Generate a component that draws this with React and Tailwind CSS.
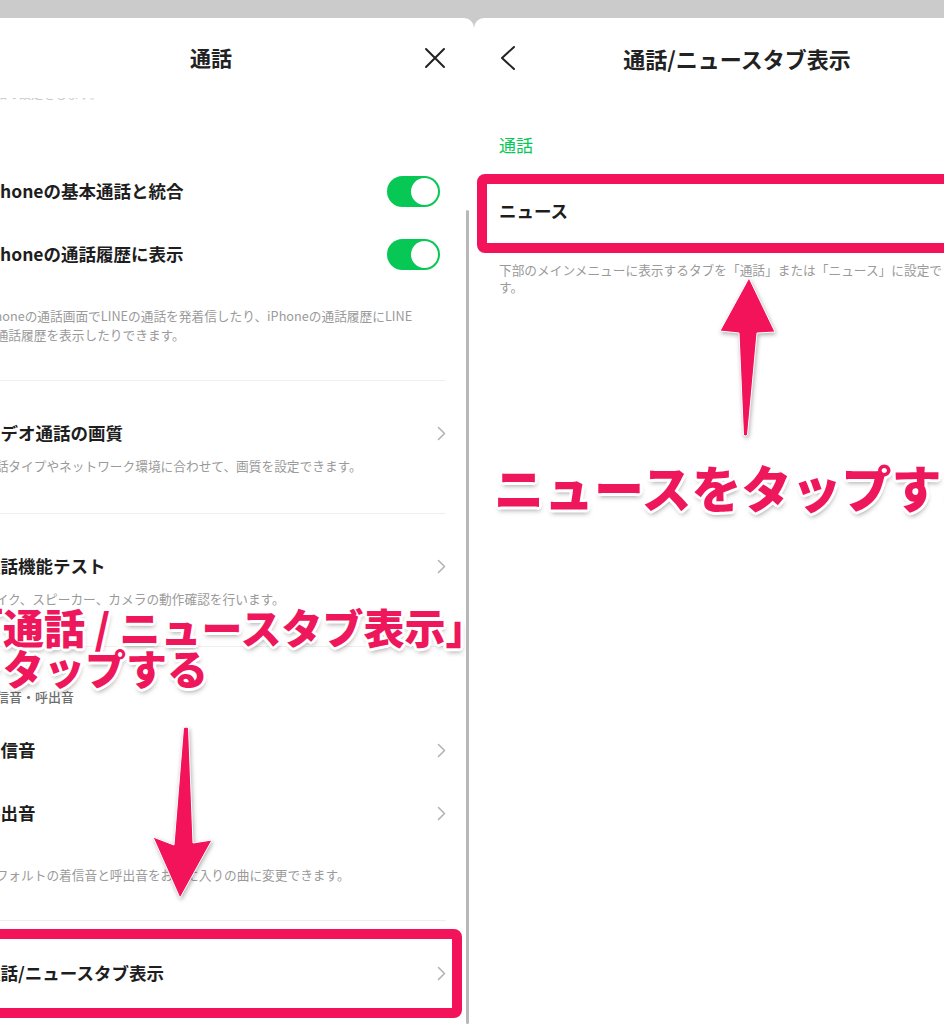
import React from 'react';

const PINK = 'text-[#ef175c]';

const Chevron = () => (
  <svg width="9" height="15" viewBox="0 0 9 15" className="shrink-0">
    <path d="M1.5 1.5 L7.5 7.5 L1.5 13.5" fill="none" stroke="#b3b3b3" strokeWidth="1.6" strokeLinecap="round" strokeLinejoin="round" />
  </svg>
);

const Toggle = () => (
  <div className="w-[53px] h-[31px] rounded-full bg-[#07c755] p-[2px] flex justify-end mr-[6px]">
    <div className="w-[27px] h-[27px] rounded-full bg-white" />
  </div>
);

const ToggleRow = ({ title }) => (
  <div className="h-[63px] flex items-center justify-between">
    <span className="text-[17.5px] font-bold text-[#1e1e1e] whitespace-nowrap">{title}</span>
    <Toggle />
  </div>
);

const LinkRow = ({ title, className = '' }) => (
  <div className={`flex items-center justify-between ${className}`}>
    <span className="text-[17.5px] font-bold text-[#1e1e1e] whitespace-nowrap">{title}</span>
    <Chevron />
  </div>
);

const Desc = ({ children, className = '' }) => (
  <div className={`text-[12.7px] leading-[19px] text-[#9a9a9a] whitespace-nowrap ${className}`}>{children}</div>
);

const Divider = () => <div className="h-px bg-[#efefef]" />;

function LeftPanel() {
  return (
    <div className="w-[474px] shrink-0 bg-white rounded-tr-[10px] overflow-hidden">
      <div className="-ml-[52px] w-[526px]">
        <div className="h-[80px] grid grid-cols-[1fr_auto_1fr] items-center">
          <div />
          <span className="text-[21px] font-bold text-[#222]">通話</span>
          <div className="flex justify-end pr-[28px]">
            <svg width="22" height="22" viewBox="0 0 22 22">
              <path d="M2 2 L20 20 M20 2 L2 20" stroke="#222" strokeWidth="2" strokeLinecap="round" />
            </svg>
          </div>
        </div>

        <div className="pl-[35px] pr-[28px]">
          <div className="h-[62px]">
            <div className="h-[3px] overflow-hidden">
              <div className="-mt-[12px] text-[12px] leading-[15px] text-[#c8c8c8] whitespace-nowrap">通話の設定をします。</div>
            </div>
          </div>
          <ToggleRow title="iPhoneの基本通話と統合" />
          <ToggleRow title="iPhoneの通話履歴に表示" />
          <Desc className="pt-[20px] pb-[36px]">
            iPhoneの通話画面でLINEの通話を発着信したり、iPhoneの通話履歴にLINE
            <br />
            の通話履歴を表示したりできます。
          </Desc>
          <Divider />

          <div className="pt-[40px] pb-[38px]">
            <LinkRow title="ビデオ通話の画質" className="h-[24px]" />
            <Desc className="mt-[11px]">通話タイプやネットワーク環境に合わせて、画質を設定できます。</Desc>
          </div>
          <Divider />

          <div className="pt-[40px] pb-[38px]">
            <LinkRow title="通話機能テスト" className="h-[24px]" />
            <Desc className="mt-[11px]">マイク、スピーカー、カメラの動作確認を行います。</Desc>
          </div>
          <Divider />

          <div className="pt-[40px] text-[13px] leading-[19px] font-medium text-[#6e6e6e]">着信音・呼出音</div>
          <div className="mt-[13px]">
            <LinkRow title="着信音" className="h-[63px]" />
            <LinkRow title="呼出音" className="h-[63px]" />
          </div>
          <Desc className="pt-[20px] pb-[36px]">デフォルトの着信音と呼出音をお気に入りの曲に変更できます。</Desc>
          <Divider />

          <div className="pt-[40px]">
            <LinkRow title="通話/ニュースタブ表示" className="h-[24px]" />
          </div>
        </div>
      </div>
    </div>
  );
}

function RightPanel() {
  return (
    <div className="w-[526px] shrink-0 bg-white rounded-tl-[10px]">
      <div className="h-[80px] grid grid-cols-[1fr_auto_1fr] items-center">
        <div className="pl-[25px]">
          <svg width="18" height="26" viewBox="0 0 18 26">
            <path d="M15 2 L3 13 L15 24" fill="none" stroke="#222" strokeWidth="2" strokeLinecap="round" strokeLinejoin="round" />
          </svg>
        </div>
        <span className="text-[22px] font-bold text-[#222]">通話/ニュースタブ表示</span>
        <div />
      </div>
      <div className="px-[25px]">
        <div className="pt-[35px] text-[17px] leading-[24px] text-[#07c755]">通話</div>
        <div className="mt-[42px] text-[17.5px] leading-[24px] font-bold text-[#1e1e1e]">ニュース</div>
        <div className="mt-[38px] text-[12.7px] leading-[17px] text-[#9a9a9a] whitespace-nowrap">
          下部のメインメニューに表示するタブを「通話」または「ニュース」に設定できま
          <br />
          す。
        </div>
      </div>
    </div>
  );
}

const outline =
  '[text-shadow:2px_2px_0_#fff,-2px_-2px_0_#fff,2px_-2px_0_#fff,-2px_2px_0_#fff,0_3px_0_#fff,0_-3px_0_#fff,3px_0_0_#fff,-3px_0_0_#fff,1px_4px_5px_rgba(0,0,0,0.35)]';

export default function App() {
  return (
    <div className="relative w-[944px] h-[1024px] overflow-hidden bg-[#cbcbcb] font-[family-name:'Noto_Sans_CJK_JP','Noto_Sans',sans-serif]">
      <div className="flex pt-[18px] h-full">
        <LeftPanel />
        <RightPanel />
      </div>

      {/* scrollbar */}
      <div className="absolute left-[466px] top-[210px] w-[3px] h-[814px] bg-[#b8b8b8] rounded-full" />

      {/* highlight boxes */}
      <div className="absolute left-[-20px] top-[929px] w-[482px] h-[89px] border-[10px] border-[#f2135b] rounded-[8px]" />
      <div className="absolute left-[477px] top-[174px] w-[500px] h-[79px] border-[10px] border-[#f2135b] rounded-[8px]" />

      {/* annotations */}
      <div className={`absolute left-[-38px] top-[606px] text-[41px] leading-[41px] font-black whitespace-nowrap ${PINK} ${outline}`}>
        <div>「通話 / ニュースタブ表示」</div>
        <div>をタップする</div>
      </div>
      <div className={`absolute left-[494px] top-[460px] text-[50px] leading-[52px] font-black whitespace-nowrap ${PINK} ${outline}`}>
        ニュースをタップする
      </div>

      <svg className="absolute left-[150px] top-[725px] drop-shadow-[1px_2px_2px_rgba(0,0,0,0.3)]" width="66" height="178" viewBox="0 0 66 178">
        <path d="M33.5 3 Q36 1 38.5 3 L43 118 L62 115 L30 173 L3 112 L24 120 Z" fill="#f2135b" stroke="#fff" strokeWidth="1" strokeLinejoin="round" />
      </svg>
      <svg className="absolute left-[715px] top-[274px] drop-shadow-[1px_2px_2px_rgba(0,0,0,0.3)]" width="66" height="166" viewBox="0 0 66 166">
        <path d="M34 4 L60 58 L42 59 L32.5 161 Q30.5 163 28.5 161 L24 59 L5 57 Z" fill="#f2135b" stroke="#fff" strokeWidth="1" strokeLinejoin="round" />
      </svg>
    </div>
  );
}
